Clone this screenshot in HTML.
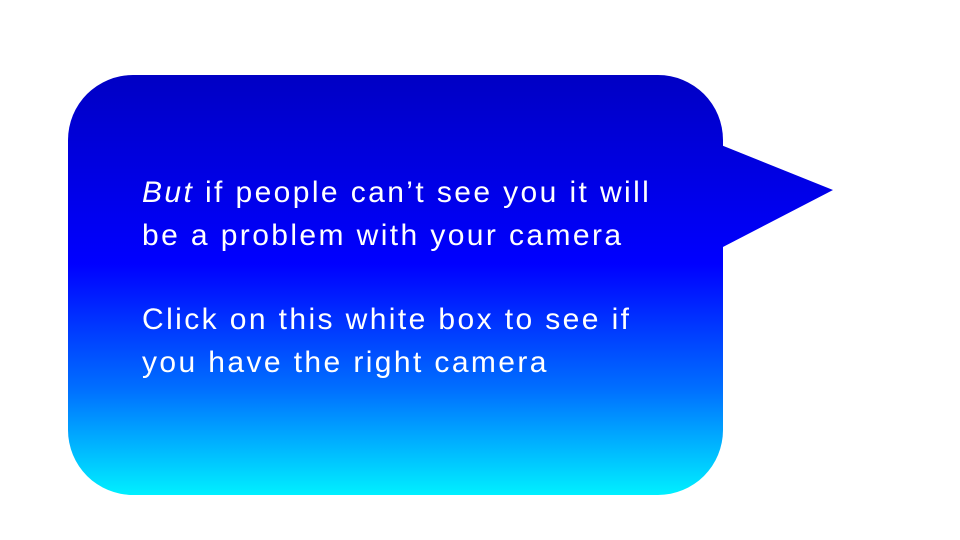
<!DOCTYPE html>
<html><head><style>
body{margin:0;width:960px;height:540px;background:#fff;overflow:hidden;position:relative;font-family:"Liberation Sans",sans-serif}
.t{position:absolute;left:142px;color:#fff;font-size:30px;white-space:nowrap;letter-spacing:2.4px}
</style></head><body>
<svg width="960" height="540" style="position:absolute;left:0;top:0">
<defs><linearGradient id="g" x1="0" y1="75" x2="0" y2="495" gradientUnits="userSpaceOnUse">
<stop offset="0" stop-color="#0000c4"/>
<stop offset="0.45" stop-color="#0000ff"/>
<stop offset="0.75" stop-color="#0070ff"/>
<stop offset="1" stop-color="#00f0ff"/>
</linearGradient></defs>
<rect x="68" y="75" width="655" height="420" rx="65" fill="url(#g)"/>
<polygon points="721,145 833,190 721,248" fill="url(#g)"/>
</svg>
<div class="t" style="top:176px"><i>But</i> if people can’t see you it will</div>
<div class="t" style="top:219px">be a problem with your camera</div>
<div class="t" style="top:303px">Click on this white box to see if</div>
<div class="t" style="top:346px">you have the right camera</div>
</body></html>
